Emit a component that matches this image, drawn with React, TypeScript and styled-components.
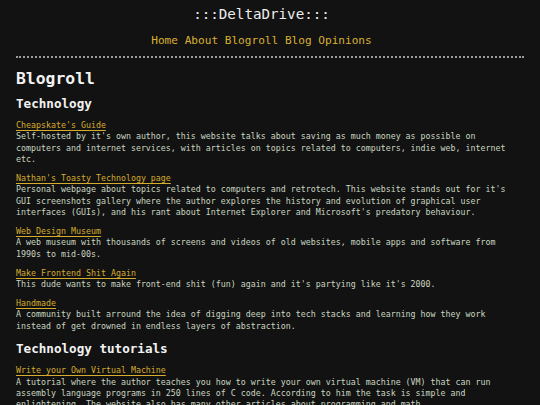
import React from "react";
import styled, { createGlobalStyle } from "styled-components";

const Global = createGlobalStyle`
  html, body { margin: 0; padding: 0; background: #121212; }
  body { font-family: "DejaVu Sans Mono", "Liberation Mono", monospace; }
`;

const Page = styled.div`
  padding: 5px 16px 0 16px;
  color: #c9d6c1;
`;

const Header = styled.header`
  display: flex;
  flex-direction: column;
  align-items: center;
  padding-right: 17px;
`;

const SiteTitle = styled.div`
  font-size: 14.2px;
  line-height: 18px;
  color: #ececec;
`;

const Nav = styled.nav`
  margin-top: 11px;
  font-size: 11.1px;
  line-height: 14px;
  display: flex;
  gap: 6.7px;
`;

const NavLink = styled.a`
  color: #d9b032;
  text-decoration: none;
`;

const Rule = styled.div`
  margin-top: 8px;
  border-top: 2px dotted #9d9d9d;
`;

const H1 = styled.h1`
  margin: 11px 0 0;
  font-size: 16.4px;
  line-height: 20px;
  color: #f2f2f2;
  font-weight: bold;
`;

const H2 = styled.h2<{ $top: number }>`
  margin: ${(p) => p.$top}px 0 0;
  font-size: 12.6px;
  line-height: 16px;
  color: #f2f2f2;
  font-weight: bold;
`;

const List = styled.div`
  margin-top: 8px;
  display: flex;
  flex-direction: column;
  gap: 7.8px;
`;

const Entry = styled.div`
  font-size: 8.3px;
  line-height: 11.3px;
`;

const EntryLink = styled.a`
  display: inline-block;
  color: #d6ac2c;
  text-decoration: underline;
  text-underline-offset: 1.5px;
`;

const Desc = styled.p`
  margin: 0;
  color: #c9d6c1;
`;

type Item = { title: string; desc: string };

const tech: Item[] = [
  {
    title: "Cheapskate's Guide",
    desc: "Self-hosted by it's own author, this website talks about saving as much money as possible on computers and internet services, with articles on topics related to computers, indie web, internet etc.",
  },
  {
    title: "Nathan's Toasty Technology page",
    desc: "Personal webpage about topics related to computers and retrotech. This website stands out for it's GUI screenshots gallery where the author explores the history and evolution of graphical user interfaces (GUIs), and his rant about Internet Explorer and Microsoft's predatory behaviour.",
  },
  {
    title: "Web Design Museum",
    desc: "A web museum with thousands of screens and videos of old websites, mobile apps and software from 1990s to mid-00s.",
  },
  {
    title: "Make Frontend Shit Again",
    desc: "This dude wants to make front-end shit (fun) again and it's partying like it's 2000.",
  },
  {
    title: "Handmade",
    desc: "A community built arround the idea of digging deep into tech stacks and learning how they work instead of get drowned in endless layers of abstraction.",
  },
];

const tutorials: Item[] = [
  {
    title: "Write your Own Virtual Machine",
    desc: "A tutorial where the author teaches you how to write your own virtual machine (VM) that can run assembly language programs in 250 lines of C code. According to him the task is simple and enlightening. The website also has many other articles about programming and math.",
  },
];

const Entries = ({ items }: { items: Item[] }) => (
  <List>
    {items.map((it) => (
      <Entry key={it.title}>
        <EntryLink href="#">{it.title}</EntryLink>
        <Desc>{it.desc}</Desc>
      </Entry>
    ))}
  </List>
);

export default function App() {
  return (
    <Page>
      <Global />
      <Header>
        <SiteTitle>:::DeltaDrive:::</SiteTitle>
        <Nav>
          <NavLink href="#">Home</NavLink>
          <NavLink href="#">About</NavLink>
          <NavLink href="#">Blogroll</NavLink>
          <NavLink href="#">Blog</NavLink>
          <NavLink href="#">Opinions</NavLink>
        </Nav>
      </Header>
      <Rule />
      <H1>Blogroll</H1>
      <H2 $top={7}>Technology</H2>
      <Entries items={tech} />
      <H2 $top={9.5}>Technology tutorials</H2>
      <Entries items={tutorials} />
    </Page>
  );
}
